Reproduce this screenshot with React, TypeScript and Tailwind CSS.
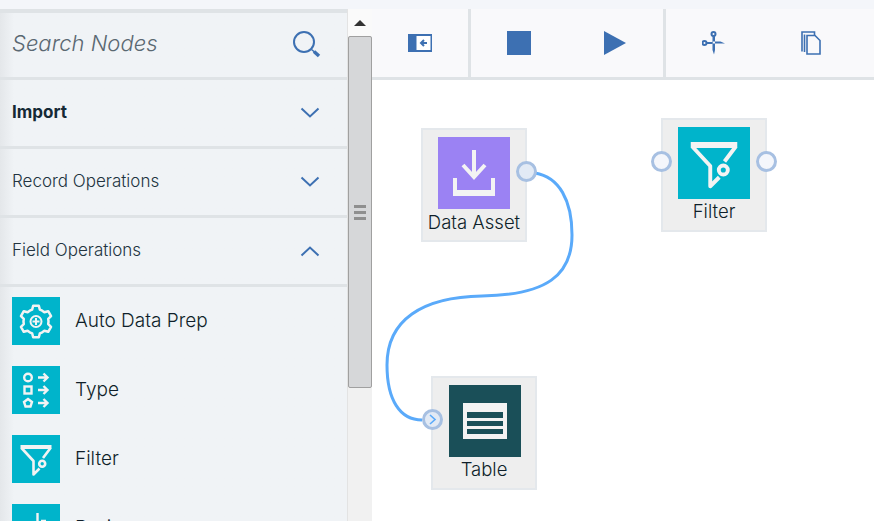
const font = { fontFamily: '"Inter", "Liberation Sans", sans-serif' };

const sections = [
  { label: "Import", bold: true, open: false },
  { label: "Record Operations", bold: false, open: false },
  { label: "Field Operations", bold: false, open: true },
];

function Chevron({ up }: { up: boolean }) {
  return (
    <svg width="20" height="12" viewBox="0 0 20 12" fill="none" stroke="#3d70b2" strokeWidth="2">
      <path d={up ? "M1.500 10.500 10 2.500l8.500 8" : "M1.500 1.500 10 9.500l8.500-8"} />
    </svg>
  );
}

function gearPath() {
  const pts: string[] = [];
  const teeth = 6;
  for (let i = 0; i < teeth; i++) {
    const a = (i / teeth) * Math.PI * 2 - Math.PI / 2;
    const step = Math.PI * 2 / teeth;
    const p = (r: number, t: number) => `${(24 + Math.cos(a + t) * r).toFixed(2)} ${(24.500 + Math.sin(a + t) * r).toFixed(2)}`;
    pts.push(p(12.500, -step * 0.5), p(12.500, -step * 0.3), p(16, -step * 0.17), p(16, step * 0.17), p(12.500, step * 0.3));
  }
  return "M" + pts.join("L") + "Z";
}

function GearIcon() {
  return (
    <svg width="48" height="48" viewBox="0 0 48 48" fill="none" stroke="#f3f3f3" strokeWidth="2.500" className="bg-[#00b4cb]">
      <path d={gearPath()} strokeLinejoin="round" />
      <circle cx="24" cy="24.500" r="5.500" strokeWidth="2" />
      <path d="M24 21v7M20.500 24.500h7" strokeWidth="2" />
    </svg>
  );
}

function TypeIcon() {
  return (
    <svg width="48" height="48" viewBox="0 0 48 48" fill="none" stroke="#f3f3f3" strokeWidth="2.400" className="bg-[#00b4cb]">
      <circle cx="16" cy="11.500" r="3.800" />
      <rect x="12.500" y="20.500" width="7" height="7" />
      <path d="m16 33 4 3-1.500 4.500h-5L12 36Z" />
      <path d="M26 11.500h9.500M31.500 7.500l4 4-4 4M26 24h9.500M31.500 20l4 4-4 4M26 37h9.500M31.500 33l4 4-4 4" />
    </svg>
  );
}

function FilterGlyph({ size, bg }: { size: number; bg: string }) {
  return (
    <svg width={size} height={size} viewBox="0 0 48 48" fill="none" stroke="#f3f3f3" strokeWidth="2.600" className={bg}>
      <path d="M8.500 10h31v4h-31Z" fill="#f3f3f3" stroke="none" />
      <path d="M38.500 13L31 23" />
      <path d="M9.500 13L21.500 26V39.500L27.500 33.500" strokeLinejoin="round" />
      <circle cx="30.200" cy="28.700" r="3" />
    </svg>
  );
}

function DownloadGlyph() {
  return (
    <svg width="72" height="72" viewBox="0 0 72 72" fill="none" stroke="#f3f3f3" strokeWidth="4" className="bg-[#9b82f3]">
      <path d="M36 13v28M25 28l11 12 11-12" />
      <path d="M15 41h4v12h34V41h4v18H15Z" fill="#f3f3f3" stroke="none" />
    </svg>
  );
}

function TableGlyph() {
  return (
    <svg width="72" height="72" viewBox="0 0 72 72" className="bg-[#1a4f58]">
      <rect x="14" y="18" width="44" height="36" fill="#f3f3f3" />
      <path d="M18 27h36v6H18ZM18 36h36v5H18ZM18 44h36v5H18Z" fill="#1a4f58" />
    </svg>
  );
}

function Node({ label, icon, className, labelClass }: { label: string; icon: React.ReactNode; className: string; labelClass?: string }) {
  return (
    <div className={`absolute flex h-[114px] w-[106px] flex-col items-center border-2 border-[#e4e8ec] bg-[#eeeeee] pt-[7px] text-[18.5px] font-light leading-[26px] text-[#0f1f2a] ${className}`}>
      {icon}
      <span className={labelClass}>{label}</span>
    </div>
  );
}

function Port({ className, fill, children }: { className: string; fill: string; children?: React.ReactNode }) {
  return (
    <div className={`absolute flex h-[21px] w-[21px] items-center justify-center rounded-full border-[3px] border-[#a7c0e2] ${fill} ${className}`}>
      {children}
    </div>
  );
}

export default function App() {
  return (
    <div className="flex h-[521px] w-[874px] flex-col overflow-hidden bg-white" style={font}>
      <div className="h-[9px] bg-[#f4f6fa]" />
      <div className="flex min-h-0 flex-1">
        {/* palette */}
        <aside className="w-[347px] overflow-hidden border-t-[4px] border-[#dfe3e6] bg-[#f0f3f6] bg-gradient-to-r from-[#e4e7ea] from-0% to-[#f0f3f6] to-[4%]">
          <div className="flex h-[67px] items-center justify-between border-b-[3px] border-[#dfe3e6] pl-3 pr-[25px]">
            <span className="mb-[3px] text-[22px] font-light italic text-[#5a6872]">Search Nodes</span>
            <svg width="30" height="30" viewBox="0 0 30 30" fill="none" stroke="#3d70b2">
              <circle cx="12" cy="12" r="10" strokeWidth="2" />
              <path d="m19.500 19.500 3 2.500" strokeWidth="1.500" />
              <path d="m22 21.500 5 4.500" strokeWidth="3.500" />
            </svg>
          </div>
          {sections.map((s) => (
            <div key={s.label} className="flex h-[69px] items-center justify-between border-b-[3px] border-[#dfe3e6] pl-3 pr-[27px] text-[17px] text-[#152935]">
              <span className={s.bold ? "font-bold" : "font-light text-[#22333f]"}>{s.label}</span>
              <Chevron up={s.open} />
            </div>
          ))}
          <div className="flex flex-col gap-[21px] pl-3 pt-[10px] text-[19px] font-light text-[#0f1f2a]">
            <div className="flex items-center gap-[15px]"><GearIcon /><span>Auto Data Prep</span></div>
            <div className="flex items-center gap-[15px]"><TypeIcon /><span>Type</span></div>
            <div className="flex items-center gap-[15px]"><FilterGlyph size={48} bg="bg-[#00b4cb]" /><span>Filter</span></div>
            <div className="flex items-center gap-[15px]">
              <svg width="48" height="48" viewBox="0 0 48 48" fill="none" stroke="#f3f3f3" strokeWidth="2.400" className="bg-[#00b4cb]">
                <path d="M25.500 9v14M29 17h5" />
              </svg>
              <span>Derive</span>
            </div>
          </div>
        </aside>

        {/* scrollbar */}
        <div className="flex w-[25px] flex-col border-l border-[#e3e3e3] bg-[#f1f1f1]">
          <div className="flex h-[27px] items-center justify-center bg-[#fafafa]">
            <div className="h-0 w-0 border-x-[6px] border-b-[6px] border-x-transparent border-b-[#333333]" />
          </div>
          <div className="flex h-[352px] items-center justify-center rounded-[2px] border border-[#a0a0a0] bg-[#d6d7d9]">
            <div className="flex w-[12px] flex-col gap-[3px]">
              <div className="h-[3px] bg-[#8f8f8f]" />
              <div className="h-[3px] bg-[#8f8f8f]" />
              <div className="h-[3px] bg-[#8f8f8f]" />
            </div>
          </div>
        </div>

        <main className="flex min-w-0 flex-1 flex-col">
          {/* toolbar */}
          <div className="flex h-[71px] border-b-[3px] border-[#dfe3e6] bg-[#f9f9fb]">
            <div className="flex w-[99px] items-center justify-center border-r-[3px] border-[#dfe3e6] pr-px">
              <svg width="24" height="18" viewBox="0 0 24 18">
                <rect width="24" height="18" fill="#3d70b2" />
                <rect x="8.500" y="2" width="14" height="14" fill="#ffffff" />
                <path d="M19 9h-6M16 6l-3 3 3 3" fill="none" stroke="#3d70b2" strokeWidth="2" />
              </svg>
            </div>
            <div className="flex w-[195px] items-center justify-between border-r-[3px] border-[#dfe3e6] pl-[36px] pr-[37px]">
              <div className="h-6 w-6 bg-[#3d70b2]" />
              <svg width="22" height="24" viewBox="0 0 22 24"><path d="M0 0 22 12 0 24Z" fill="#3d70b2" /></svg>
            </div>
            <div className="flex flex-1 items-center gap-[76px] pl-[36px]">
              <svg width="23" height="24" viewBox="0 0 23 24" fill="none" stroke="#3d70b2" strokeWidth="2">
                <circle cx="11.500" cy="3" r="2" />
                <circle cx="2.500" cy="12" r="2" />
                <path d="M4.500 12h6" />
                <path d="M10 10.500h8.500l4.500 2H10ZM10.500 5v14l1.500 4.500 1-4.500V5" fill="#3d70b2" stroke="none" />
              </svg>
              <svg width="20" height="24" viewBox="0 0 20 24" fill="none" stroke="#3d70b2" strokeWidth="1.600">
                <path d="M1 20.500V1h12.500v3.500" />
                <path d="M3.500 21V3.500" />
                <path d="M6 23V4.500h8l5 5V23Z" />
              </svg>
            </div>
          </div>

          {/* flow canvas: node positions are the content */}
          <div className="relative flex-1 bg-white">
            <svg width="502" height="441" viewBox="0 0 502 441" fill="none" className="absolute left-0 top-0">
              <path d="M163 93C187 97 200 120 200 155C200 195 175 215 110 216C50 217 15 240 15 285C15 320 28 340 50 340" stroke="#5aaafa" strokeWidth="3" />
            </svg>
            <Node label="Data Asset" icon={<DownloadGlyph />} className="left-[49px] top-[48px]" />
            <Port fill="bg-[#e2eaf5]" className="left-[144px] top-[81px]" />
            <Node label="Filter" labelClass="-mt-px" icon={<FilterGlyph size={72} bg="bg-[#00b4cb]" />} className="left-[289px] top-[38px]" />
            <Port fill="bg-[#f4f6fb]" className="left-[279px] top-[71px]" />
            <Port fill="bg-[#f4f6fb]" className="left-[384px] top-[71px]" />
            <Node label="Table" labelClass="-mt-px" icon={<span className="ml-px flex"><TableGlyph /></span>} className="left-[59px] top-[296px]" />
            <Port fill="bg-[#e2eaf5]" className="left-[50px] top-[329px]">
              <svg width="9" height="11" viewBox="0 0 9 11" fill="none" stroke="#5aaafa" strokeWidth="1.600"><path d="m2 1 5 4.500-5 4.500" /></svg>
            </Port>
          </div>
        </main>
      </div>
    </div>
  );
}
